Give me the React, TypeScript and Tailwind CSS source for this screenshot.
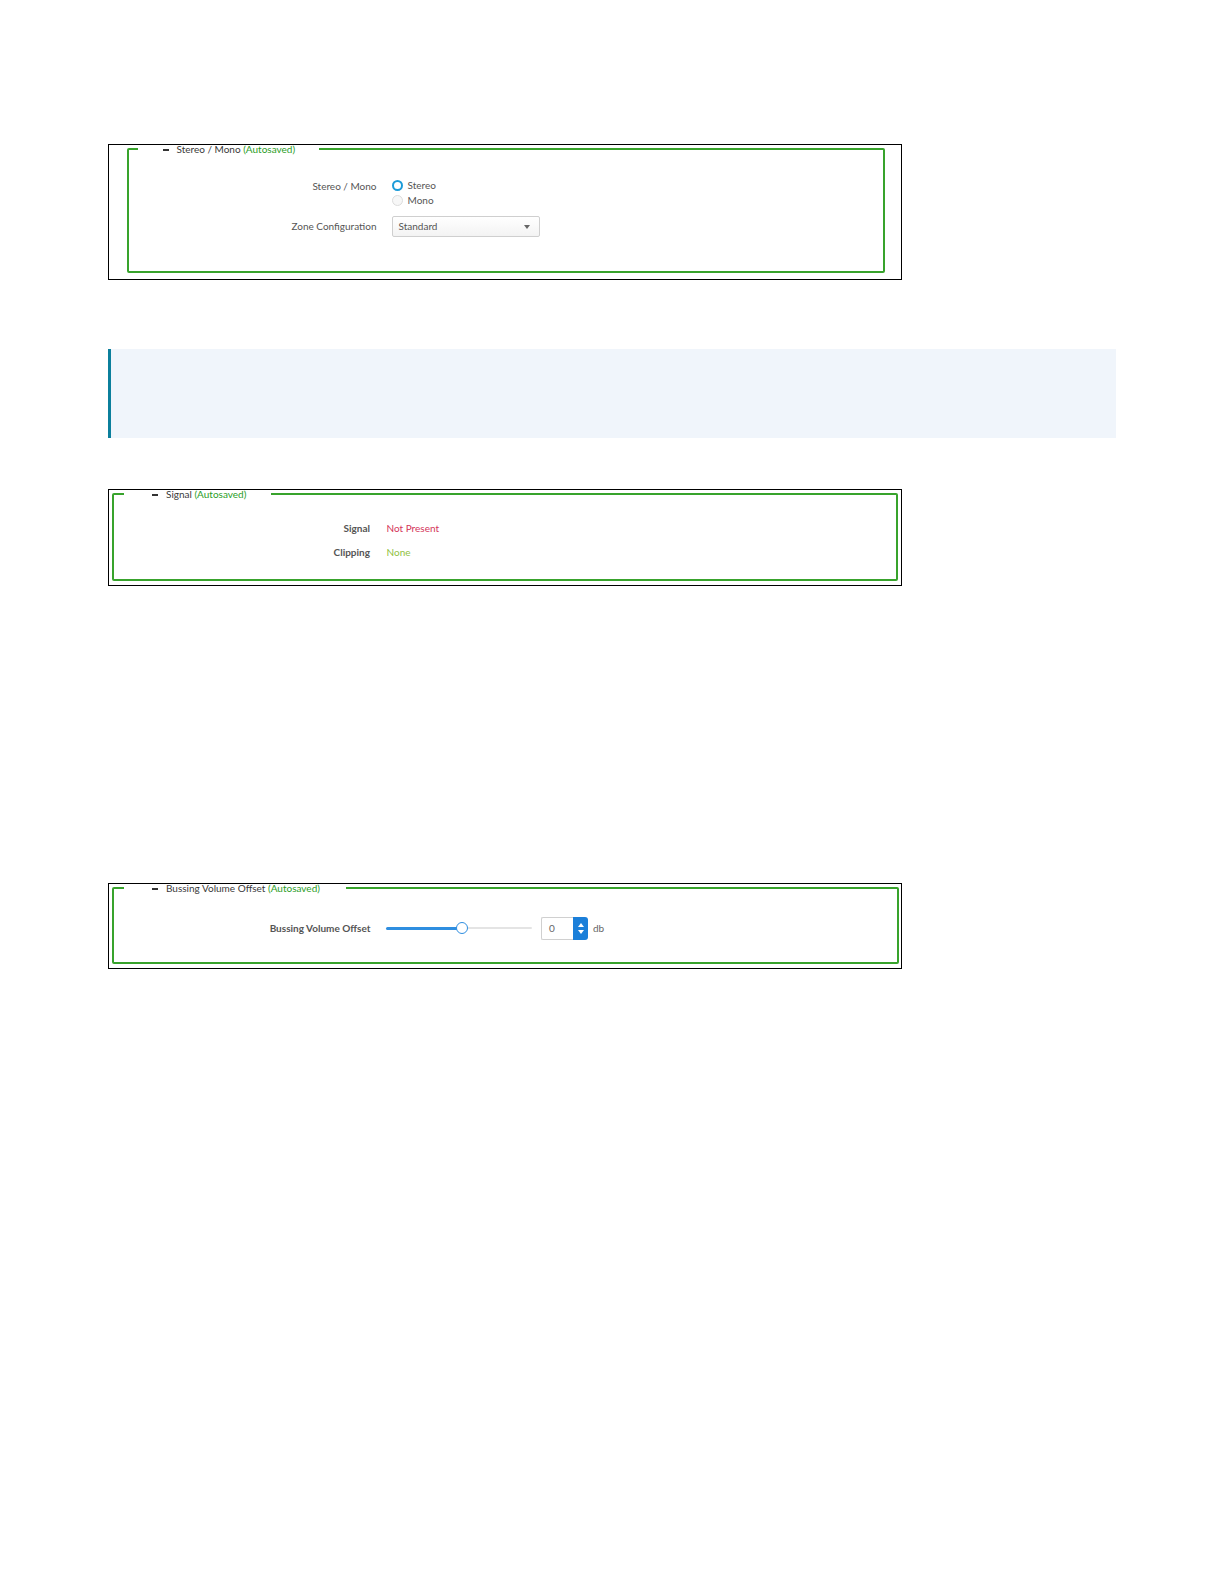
import type { ReactNode } from 'react';

type PanelProps = {
  title: string;
  outer: string;
  legend: string;
  children: ReactNode;
};

const Panel = ({ title, outer, legend, children }: PanelProps) => {
  return (
    <div className={`w-[794px] border-[1.5px] border-black flex flex-col ${outer}`}>
      <fieldset className="flex-1 border-2 border-[#38a32c] rounded-[2px]">
        <legend className={`text-[10px] leading-[8px] text-[#3a3a3a] whitespace-nowrap ${legend}`}>
          <span className="inline-block align-middle w-[6px] h-[1.5px] bg-[#333] mr-[8px] mb-[1px]" />
          {title} <span className="text-[#2a9d26]">(Autosaved)</span>
        </legend>
        {children}
      </fieldset>
    </div>
  );
};

const Radio = ({ checked, label }: { checked?: boolean; label: string }) => (
  <div className="h-[15px] flex items-center">
    {checked ? (
      <span className="w-[11px] h-[11px] rounded-full border-[2.5px] border-[#1c9bd8] bg-white" />
    ) : (
      <span className="w-[11px] h-[11px] rounded-full border border-[#dcdcdc] bg-[#f7f7f7]" />
    )}
    <span className="ml-[5px] text-[#555]">{label}</span>
  </div>
);

export default function App() {
  return (
    <div className="min-h-[1584px] w-full bg-white font-[Lato,sans-serif] text-[10px] pl-[108px] pt-[144px]">
      {/* Stereo / Mono */}
      <Panel title="Stereo / Mono" outer="h-[136px] pl-[17.5px] pr-[16.5px] pb-[6.5px]" legend="ml-[9px] pl-[25px] pr-[24px]">
        <div className="pt-[25px]">
          <div className="flex">
            <div className="w-[248px] text-right text-[#555] leading-[15px] pt-[1px]">Stereo / Mono</div>
            <div className="ml-[15px] flex flex-col">
              <Radio checked label="Stereo" />
              <Radio label="Mono" />
            </div>
          </div>
          <div className="flex items-center mt-[8px]">
            <div className="w-[248px] text-right text-[#555]">Zone Configuration</div>
            <div className="ml-[15px] w-[148px] h-[21px] border border-[#cfcfcf] rounded-[2px] bg-gradient-to-b from-white to-[#f3f3f3] flex items-center justify-between pl-[6px] pr-[9px] text-[#555]">
              <span>Standard</span>
              <span className="w-0 h-0 border-l-[3.5px] border-r-[3.5px] border-t-[4px] border-l-transparent border-r-transparent border-t-[#666]" />
            </div>
          </div>
        </div>
      </Panel>

      {/* note box */}
      <div className="mt-[69px] w-[1008px] h-[89px] bg-[#f0f5fb] border-l-[3px] border-[#0b7f9c]" />

      {/* Signal */}
      <Panel title="Signal" outer="mt-[51px] h-[97px] pl-[2.5px] pr-[2.8px] pb-[4px]" legend="ml-[10.5px] pl-[28px] pr-[25px]">
        <div className="pt-[20px] flex flex-col gap-[4px]">
          <div className="flex items-center h-[20px]">
            <div className="w-[256.5px] text-right font-bold text-[#555]">Signal</div>
            <div className="ml-[16.5px] text-[#d4345a]">Not Present</div>
          </div>
          <div className="flex items-center h-[20px]">
            <div className="w-[256.5px] text-right font-bold text-[#555]">Clipping</div>
            <div className="ml-[16.5px] text-[#8fbf3f]">None</div>
          </div>
        </div>
      </Panel>

      {/* Bussing Volume Offset */}
      <Panel title="Bussing Volume Offset" outer="mt-[297px] h-[86px] pl-[2.5px] pr-[2.5px] pb-[4px]" legend="ml-[10.5px] pl-[28px] pr-[26px]">
        <div className="pt-[24px] flex items-center h-[48px]">
          <div className="w-[257px] text-right font-bold text-[#555]">Bussing Volume Offset</div>
          <div className="ml-[15.5px] relative w-[146px] h-[12px] flex items-center">
            <div className="w-[76px] h-[3px] bg-[#2f8ee0] rounded-l-full" />
            <div className="flex-1 h-[2.5px] bg-[#e4e4e4] rounded-r-full" />
            <span className="absolute left-[70px] top-0 w-[12px] h-[12px] rounded-full border-[1.5px] border-[#2f8ee0] bg-white" />
          </div>
          <div className="ml-[9px] flex h-[23px]">
            <div className="w-[32px] border border-r-0 border-[#d0d0d0] rounded-l-[2px] flex items-center pl-[7px] text-[#666]">0</div>
            <div className="w-[15px] bg-[#1b7fd9] rounded-r-[3px] flex flex-col items-center justify-center gap-[3px]">
              <span className="w-0 h-0 border-l-[3.5px] border-r-[3.5px] border-b-[4px] border-l-transparent border-r-transparent border-b-white" />
              <span className="w-0 h-0 border-l-[3.5px] border-r-[3.5px] border-t-[4px] border-l-transparent border-r-transparent border-t-white" />
            </div>
          </div>
          <div className="ml-[5px] text-[#666]">db</div>
        </div>
      </Panel>
    </div>
  );
}
